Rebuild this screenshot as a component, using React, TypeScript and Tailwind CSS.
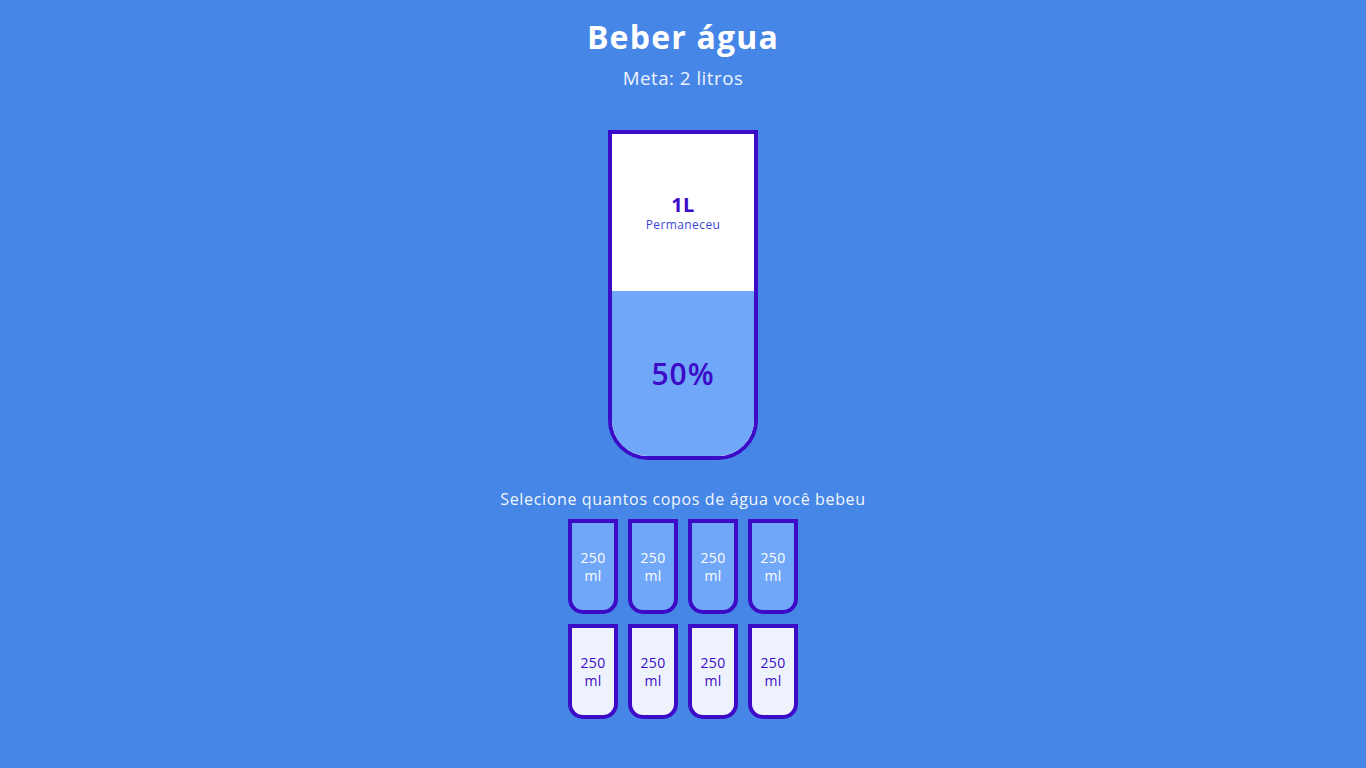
import { useState } from 'react'

const TOTAL = 8

export default function App() {
  const [full, setFull] = useState(4)

  const pct = (full / TOTAL) * 100
  const remainedL = (2 - (250 * full) / 1000).toString()

  const clickCup = (i: number) => {
    // clicking the last full cup empties it
    if (i === full - 1) setFull(i)
    else setFull(i + 1)
  }

  return (
    <div
      className="min-h-screen w-full bg-[#4686e6] text-white flex flex-col items-center pb-10"
      style={{ fontFamily: '"Open Sans", "Liberation Sans", sans-serif' }}
    >
      <h1 className="mt-[17px] text-[32px] font-bold leading-[39px] tracking-[1.2px]">Beber água</h1>
      <h3 className="mt-[11px] mb-[10px] text-[18.72px] font-normal leading-[22px] tracking-[0.5px] text-[#eef4ff]">
        Meta: 2 litros
      </h3>

      {/* big cup */}
      <div className="mt-[31px] mb-[30px] h-[330px] w-[150px] flex flex-col overflow-hidden rounded-b-[40px] border-4 border-[#3b0bc8] bg-white text-[#3b0bc8]">
        <div className="flex flex-1 flex-col items-center justify-center">
          <span className="text-[20px] font-bold leading-[22px] tracking-[0.5px]">{remainedL}L</span>
          <small className="mt-[2px] text-[12px] leading-[14px] tracking-[0.4px] text-[#3c46d6]">Permaneceu</small>
        </div>
        <div
          className="flex items-center justify-center bg-[#70a7f8] text-[30px] font-semibold tracking-[1px]"
          style={{ height: `${(pct / 100) * 330}px` }}
        >
          {pct}%
        </div>
      </div>

      <p className="text-[16px] leading-[18px] tracking-[0.65px] text-[#f2f6ff]">Selecione quantos copos de água você bebeu</p>

      <div className="mt-[6px] flex w-[280px] flex-wrap justify-center">
        {Array.from({ length: TOTAL }).map((_, i) => (
          <div
            key={i}
            onClick={() => clickCup(i)}
            className={`m-[5px] flex h-[95px] w-[50px] cursor-pointer items-center justify-center rounded-b-[15px] border-4 border-[#3b0bc8] text-center text-[14px] leading-[18px] tracking-[0.3px] ${
              i < full ? 'bg-[#70a7f8] text-white' : 'bg-[#edf2fc] text-[#3b0bc8]'
            }`}
          >
            250 ml
          </div>
        ))}
      </div>
    </div>
  )
}
